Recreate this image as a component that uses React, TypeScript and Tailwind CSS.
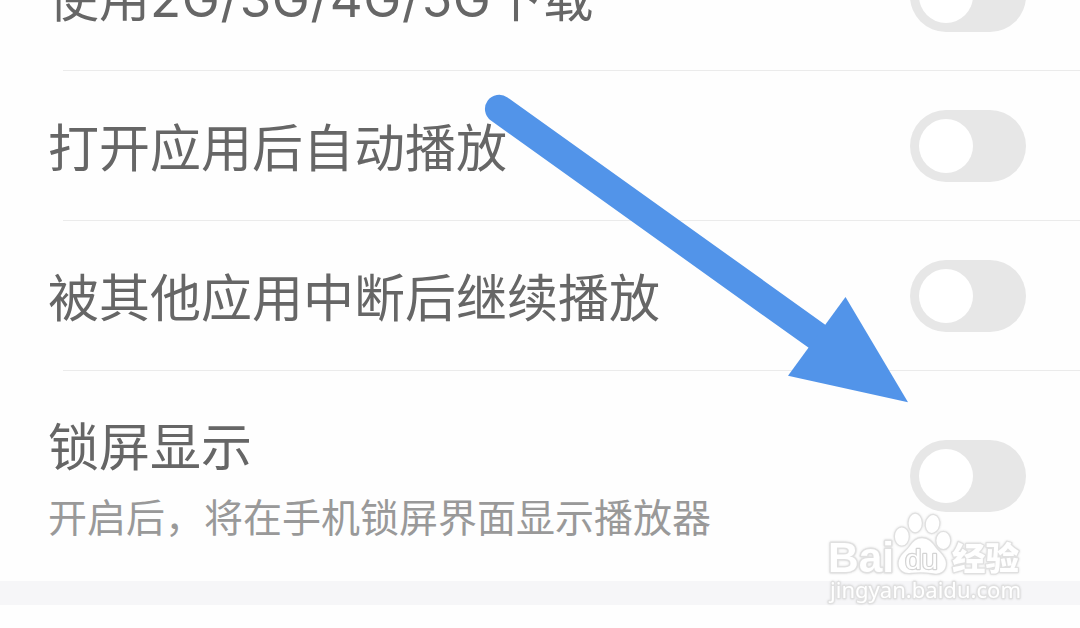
import React from 'react';

interface SettingRowProps {
  title: React.ReactNode;
  description?: string;
  tall?: boolean;
}

function Toggle() {
  return (
    <button
      type="button"
      role="switch"
      aria-checked={false}
      className="h-[72px] w-[116px] shrink-0 rounded-full bg-[#e7e7e7] p-[9px]"
    >
      <span className="block h-[54px] w-[54px] rounded-full bg-white" />
    </button>
  );
}

function SettingRow({ title, description, tall }: SettingRowProps) {
  return (
    <div
      className={`flex shrink-0 items-center justify-between pl-12 pr-[54px] ${
        tall ? 'h-[210px]' : 'h-[150px]'
      }`}
    >
      <div className={description ? 'pt-1' : 'pb-[3px]'}>
        <h2 className="h-[72px] whitespace-nowrap text-[51px] leading-[72px] text-[#666666]">{title}</h2>
        {description && (
          <p className="h-[68px] whitespace-nowrap text-[39px] leading-[70px] text-[#999999]">
            {description}
          </p>
        )}
      </div>
      <Toggle />
    </div>
  );
}

function Divider() {
  return <div className="-mt-px ml-[63px] h-px shrink-0 bg-[#ebebeb]" />;
}

function Arrow() {
  return (
    <svg className="pointer-events-none absolute left-[480px] top-[90px]" width="440" height="320" viewBox="480 90 440 320">
      <path d="M499.2 109 L818 337" fill="none" stroke="#5294e9" strokeWidth="28.5" strokeLinecap="round" />
      <path d="M845.5 297 L908 402.3 L788 375.8 Z" fill="#5294e9" />
    </svg>
  );
}

function Watermark() {
  return (
    <svg
      className="pointer-events-none absolute left-[820px] top-[505px] drop-shadow-[0_0_1px_rgba(0,0,0,0.12)]"
      width="210"
      height="105"
      viewBox="820 505 210 105"
      fill="#ffffff"
      stroke="#e0e0e0"
      strokeWidth="1.3"
      strokeLinejoin="round"
    >
      <ellipse cx="901.8" cy="536.5" rx="7.5" ry="9.7" />
      <ellipse cx="915.2" cy="523" rx="7.2" ry="9.8" />
      <ellipse cx="932.5" cy="524" rx="7.3" ry="9.6" transform="rotate(10 932.5 524)" />
      <ellipse cx="943.3" cy="540.5" rx="7.5" ry="9.2" />
      <path d="M922 537.5 C915 537.5 911.5 542 908.5 547 C905.5 551.5 898 555 898 563 C898 571 904 574.5 911 573.5 C918 572.5 925 572.5 933 574 C941 575.5 946.5 571 946.5 563.5 C946.5 556 940 552.5 936 547 C932.5 542 929 537.5 922 537.5 Z" />
      <g className="[paint-order:stroke]" strokeWidth="2.4">
        <text x="828" y="572" fontSize="42" fontWeight="700" strokeWidth="3" textLength="66" lengthAdjust="spacingAndGlyphs" className="font-['Liberation_Sans',sans-serif]">
          Bai
        </text>
        <text x="905" y="568.5" fontSize="28" stroke="#d4d4d4" textLength="33" lengthAdjust="spacingAndGlyphs" className="font-['Liberation_Sans',sans-serif]">
          du
        </text>
        <text x="952" y="570" fontSize="32" fontWeight="900" textLength="67" lengthAdjust="spacingAndGlyphs" className="font-['Noto_Sans_CJK_SC',sans-serif]">
          经验
        </text>
        <text x="830" y="598" fontSize="22" textLength="191" lengthAdjust="spacingAndGlyphs" className="font-['Noto_Sans',sans-serif]">
          jingyan.baidu.com
        </text>
      </g>
    </svg>
  );
}

export default function App() {
  return (
    <div className="relative flex h-[628px] w-[1080px] flex-col overflow-hidden bg-[#fefefe] font-['Noto_Sans_CJK_SC',sans-serif]">
      <div className="-mt-[79px] flex flex-col">
        <SettingRow
          title={
            <>
              使用<span className="font-['Inter'] tracking-[0.7px]">2G/3G/4G/5G</span>下载
            </>
          }
        />
        <Divider />
        <SettingRow title="打开应用后自动播放" />
        <Divider />
        <SettingRow title="被其他应用中断后继续播放" />
        <Divider />
        <SettingRow title="锁屏显示" description="开启后，将在手机锁屏界面显示播放器" tall />
      </div>
      <div className="h-6 shrink-0 bg-[#f6f6f8]" />
      <Arrow />
      <Watermark />
    </div>
  );
}
